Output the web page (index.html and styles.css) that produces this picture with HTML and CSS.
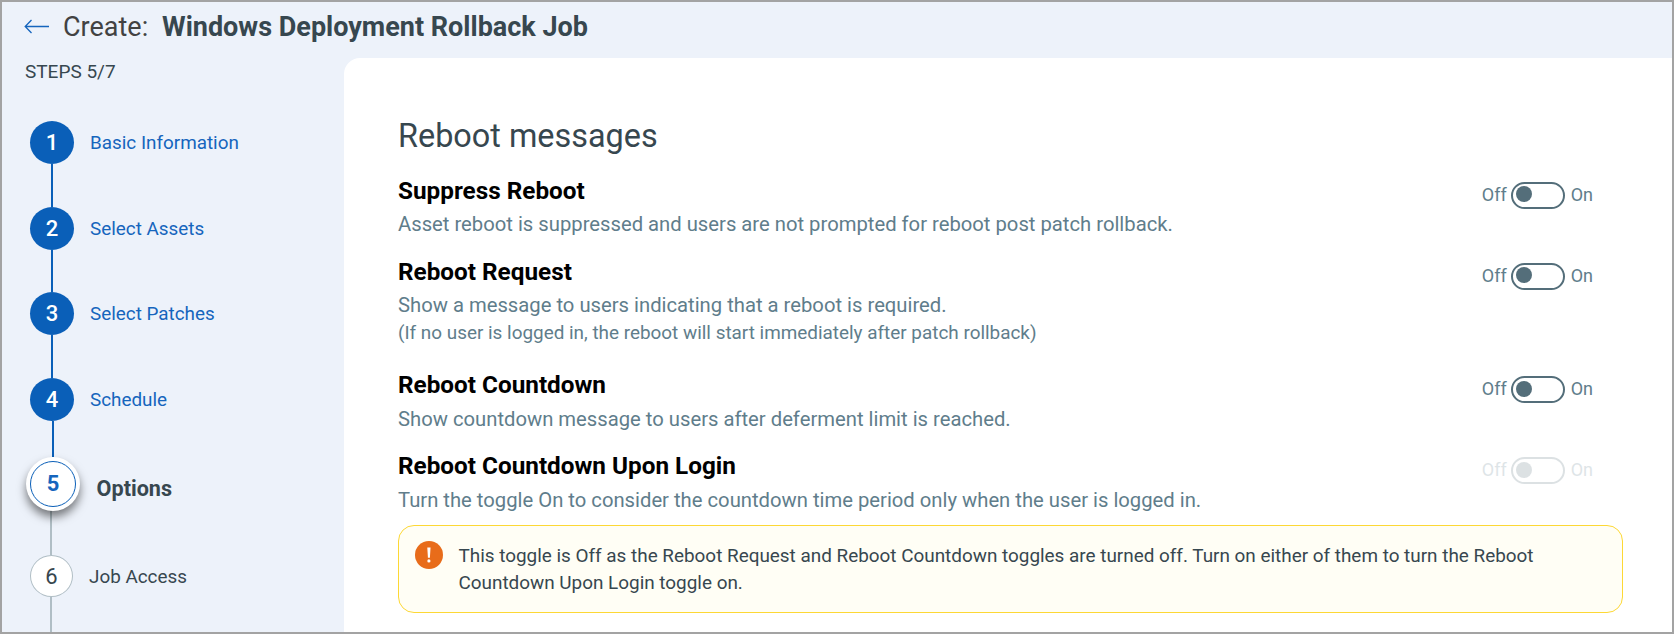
FILE: index.html
```html
<!DOCTYPE html>
<html lang="en">
<head>
    <meta charset="UTF-8">
    <meta name="viewport" content="width=device-width, initial-scale=1.0">
    <title>Create: Windows Deployment Rollback Job</title>
    <link rel="stylesheet" href="styles.css">
</head>
<body>
    <div class="page">
        <header class="header">
            <svg class="back" width="26" height="16" viewBox="0 0 26 16" fill="none" stroke="#1565bd" stroke-width="1.3">
                <path d="M25 7.5H1.2M7.5 1L1.2 7.5L7.5 14"/>
            </svg>
            <span class="create">Create:</span>
            <h1 class="job-title">Windows Deployment Rollback Job</h1>
        </header>
        <div class="body">
            <nav class="sidebar">
                <p class="steps-count">STEPS 5/7</p>
                <ol class="steps">
                    <li class="step done"><span class="circle">1</span><span class="label">Basic Information</span></li>
                    <li class="line"></li>
                    <li class="step done"><span class="circle">2</span><span class="label">Select Assets</span></li>
                    <li class="line short"></li>
                    <li class="step done"><span class="circle">3</span><span class="label">Select Patches</span></li>
                    <li class="line"></li>
                    <li class="step done"><span class="circle">4</span><span class="label">Schedule</span></li>
                    <li class="line to-current"></li>
                    <li class="step current"><span class="circle"><span class="ring">5</span></span><span class="label">Options</span></li>
                    <li class="line next"></li>
                    <li class="step todo"><span class="circle">6</span><span class="label">Job Access</span></li>
                    <li class="line last"></li>
                </ol>
            </nav>
            <main class="content">
                <h2 class="heading">Reboot messages</h2>
                <section class="option">
                    <div class="text">
                        <h3>Suppress Reboot</h3>
                        <p>Asset reboot is suppressed and users are not prompted for reboot post patch rollback.</p>
                    </div>
                    <div class="toggle"><span class="off">Off</span><span class="switch"><span class="knob"></span></span><span class="on">On</span></div>
                </section>
                <section class="option request">
                    <div class="text">
                        <h3>Reboot Request</h3>
                        <p>Show a message to users indicating that a reboot is required.</p>
                        <p class="note">(If no user is logged in, the reboot will start immediately after patch rollback)</p>
                    </div>
                    <div class="toggle"><span class="off">Off</span><span class="switch"><span class="knob"></span></span><span class="on">On</span></div>
                </section>
                <section class="option countdown">
                    <div class="text">
                        <h3>Reboot Countdown</h3>
                        <p>Show countdown message to users after deferment limit is reached.</p>
                    </div>
                    <div class="toggle"><span class="off">Off</span><span class="switch"><span class="knob"></span></span><span class="on">On</span></div>
                </section>
                <section class="option countdown login">
                    <div class="text">
                        <h3>Reboot Countdown Upon Login</h3>
                        <p>Turn the toggle On to consider the countdown time period only when the user is logged in.</p>
                    </div>
                    <div class="toggle disabled"><span class="off">Off</span><span class="switch"><span class="knob"></span></span><span class="on">On</span></div>
                </section>
                <div class="alert">
                    <svg class="alert-icon" width="28" height="28" viewBox="0 0 28 28">
                        <circle cx="14" cy="14" r="14" fill="#e86c1a"/>
                        <path d="M12.3 6.5h3.2l-.6 10.2h-2z" fill="#fff"/>
                        <circle cx="13.9" cy="19.9" r="1.6" fill="#fff"/>
                    </svg>
                    <p>This toggle is Off as the Reboot Request and Reboot Countdown toggles are turned off. Turn on either of them to turn the Reboot<br>Countdown Upon Login toggle on.</p>
                </div>
            </main>
        </div>
    </div>
</body>
</html>
```

FILE: styles.css
```css
* {
    margin: 0;
    padding: 0;
    box-sizing: border-box;
}

body {
    font-family: Roboto, "Liberation Sans", sans-serif;
    color: #37474f;
}

.page {
    display: flex;
    flex-direction: column;
    height: 634px;
    border: 2px solid #a3a3a3;
    background-color: #edf2fa;
    overflow: hidden;
}

.header {
    display: flex;
    align-items: center;
    height: 56px;
    padding: 0 0 6px 22px;
    font-size: 27px;
    line-height: 32px;
    white-space: nowrap;
}

.back {
    margin: 0 13px 1px 0;
}

.create {
    width: 99px;
    color: #424242;
}

.job-title {
    font-size: 27px;
    font-weight: bold;
}

.body {
    display: flex;
    flex: 1;
    min-height: 0;
}

/* steps */
.sidebar {
    width: 342px;
    padding-left: 24px;
}

.steps-count {
    padding-top: 1px;
    margin-left: -1px;
    font-size: 19px;
    line-height: 26px;
}

.steps {
    list-style: none;
    padding: 36px 0 0 4px;
}

.step {
    display: flex;
    align-items: center;
}

.circle {
    display: flex;
    align-items: center;
    justify-content: center;
    width: 44px;
    height: 43px;
    border-radius: 50%;
    font-size: 22px;
    font-weight: 500;
}

.label {
    margin-left: 16px;
    font-size: 18.87px;
}

.done .circle {
    background-color: #0a5fb8;
    color: white;
}

.done .label {
    color: #1565bd;
}

.line {
    width: 2px;
    height: 43px;
    margin-left: 21px;
    background-color: #0a5fb8;
}

.line.short {
    height: 42px;
}

.line.to-current {
    height: 36px;
    margin-left: 22px;
}

.current {
    margin-left: -4px;
}

.current .circle {
    width: 54px;
    height: 54px;
    padding-bottom: 1px;
    background-color: white;
    box-shadow: 0 6px 10px rgba(0, 0, 0, 0.5);
}

.ring {
    display: flex;
    align-items: center;
    justify-content: center;
    width: 46px;
    height: 46px;
    border: 1px solid #0a5fb8;
    border-radius: 50%;
    color: #1565bd;
    font-weight: bold;
}

.current .label {
    margin: 9px 0 0 16.6px;
    font-size: 21.6px;
    font-weight: bold;
}

.line.next {
    height: 44px;
    margin-left: 20px;
    background-color: #b0bec5;
}

.todo .circle {
    width: 43px;
    height: 42px;
    border: 1px solid #b0bec5;
    background-color: white;
    font-weight: normal;
}

.line.last {
    height: 36px;
    margin-left: 20px;
    background-color: #b0bec5;
}

/* content */
.content {
    flex: 1;
    padding: 58px 49px 0 54px;
    border-top-left-radius: 16px;
    background-color: white;
}

.heading {
    margin-bottom: 19px;
    font-size: 32.4px;
    font-weight: normal;
    line-height: 40px;
}

.option {
    display: flex;
    justify-content: space-between;
    padding: 0 30px 18px 0;
}

.option h3 {
    margin-bottom: 4px;
    color: black;
    font-size: 24.3px;
    font-weight: bold;
    line-height: 32px;
}

.option p {
    color: #607d8b;
    font-size: 20.24px;
    line-height: 27px;
}

.option .note {
    font-size: 18.9px;
}

.option.request {
    padding-bottom: 23px;
}

.countdown h3 {
    margin-bottom: 5px;
}

.option.countdown {
    padding-bottom: 17px;
}

.option.login {
    padding-bottom: 11px;
}

.toggle {
    display: flex;
    align-items: center;
    height: 27px;
    margin-top: 7px;
    color: #607d8b;
    font-size: 18px;
}

.off, .on {
    padding-bottom: 2px;
}

.switch {
    width: 54px;
    height: 27px;
    margin: 0 6px 0 4px;
    padding: 2px 3px;
    border: 2px solid #546e7a;
    border-radius: 14px;
}

.knob {
    display: block;
    width: 16px;
    height: 16px;
    border-radius: 50%;
    background-color: #546e7a;
}

.countdown .switch {
    padding-top: 3px;
}

.disabled {
    opacity: 0.2;
}

.alert {
    display: flex;
    height: 88px;
    padding: 15px 16px;
    border: 1px solid #fdd835;
    border-radius: 16px;
    background-color: #fffef5;
}

.alert-icon {
    margin-right: 15.5px;
}

.alert p {
    padding-top: 1px;
    font-size: 18.9px;
    line-height: 27px;
    white-space: nowrap;
}
```
